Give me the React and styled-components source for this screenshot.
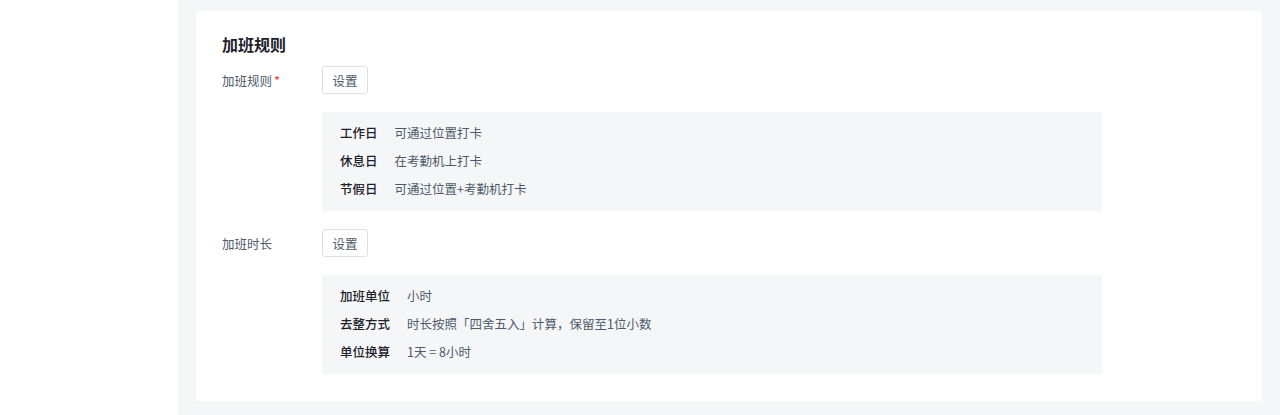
import React from 'react';
import styled, { createGlobalStyle } from 'styled-components';

const GlobalStyle = createGlobalStyle`
  html, body {
    margin: 0;
    padding: 0;
    background: #f5f6f8;
    font-family: "Noto Sans CJK SC", "Noto Sans", sans-serif;
  }
`;

const sections = [
  {
    label: '加班规则',
    required: true,
    rows: [
      ['工作日', '可通过位置打卡'],
      ['休息日', '在考勤机上打卡'],
      ['节假日', '可通过位置+考勤机打卡'],
    ],
  },
  {
    label: '加班时长',
    required: false,
    rows: [
      ['加班单位', '小时'],
      ['去整方式', '时长按照「四舍五入」计算，保留至1位小数'],
      ['单位换算', '1天 = 8小时'],
    ],
  },
];

const App = () => {
  return (
    <>
      <GlobalStyle />
      <Page>
        <Sidebar />
        <Main>
          <Card>
            <Title>加班规则</Title>
            {sections.map((section) => (
              <Section key={section.label}>
                <FormRow>
                  <FormLabel>
                    {section.label}
                    {section.required && <Star>*</Star>}
                  </FormLabel>
                  <SetButton>设置</SetButton>
                </FormRow>
                <InfoBox>
                  {section.rows.map(([k, v]) => (
                    <React.Fragment key={k}>
                      <InfoKey>{k}</InfoKey>
                      <InfoValue>{v}</InfoValue>
                    </React.Fragment>
                  ))}
                </InfoBox>
              </Section>
            ))}
          </Card>
        </Main>
      </Page>
    </>
  );
};

const Page = styled.div`
  display: flex;
  height: 415px;
  overflow: hidden;
`;

const Sidebar = styled.div`
  width: 178px;
  flex-shrink: 0;
  background: #ffffff;
`;

const Main = styled.div`
  flex: 1;
  padding: 11px 18px 14px 18px;
  background: #f5f6f8;
`;

const Card = styled.div`
  background: #ffffff;
  padding: 21px 26px 27px 26px;
  display: flex;
  flex-direction: column;
`;

const Title = styled.div`
  font-size: 16px;
  line-height: 24px;
  font-weight: 600;
  color: #1d2129;
  margin-bottom: 10px;
`;

const Section = styled.div`
  display: flex;
  flex-direction: column;
  gap: 18px;
  & + & {
    margin-top: 18px;
  }
`;

const FormRow = styled.div`
  display: flex;
  align-items: center;
`;

const FormLabel = styled.div`
  width: 100px;
  font-size: 12.5px;
  color: #4e5969;
  display: flex;
  align-items: center;
`;

const Star = styled.span`
  color: #f53f3f;
  margin-left: 2px;
  font-size: 13px;
`;

const SetButton = styled.button`
  height: 28px;
  width: 46px;
  padding: 0;
  border: 1px solid #dcdfe6;
  border-radius: 3px;
  background: #ffffff;
  color: #4e5969;
  font-family: inherit;
  font-size: 12.5px;
  cursor: pointer;
`;

const InfoBox = styled.div`
  margin-left: 100px;
  width: 780px;
  box-sizing: border-box;
  background: #f5f6f8;
  padding: 6px 18px 9px 18px;
  display: grid;
  grid-template-columns: max-content 1fr;
  grid-auto-rows: 28px;
  column-gap: 17px;
  align-items: center;
  font-size: 12.5px;
`;

const InfoKey = styled.div`
  color: #1d2129;
  font-weight: 500;
`;

const InfoValue = styled.div`
  color: #4e5969;
`;

export default App;
